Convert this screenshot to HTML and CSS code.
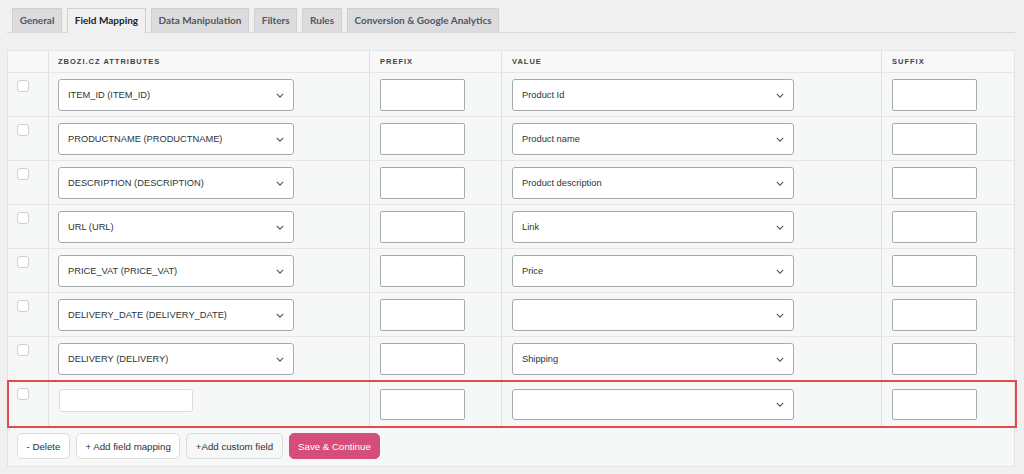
FILE: index.html
```html
<!DOCTYPE html>
<html lang="en">
<head>
  <meta charset="UTF-8" />
  <title>Field Mapping</title>
  <link rel="stylesheet" href="styles.css">
</head>
<body>
  <div class="tabs">
    <a class="tab">General</a>
    <a class="tab active">Field Mapping</a>
    <a class="tab">Data Manipulation</a>
    <a class="tab">Filters</a>
    <a class="tab">Rules</a>
    <a class="tab">Conversion &amp; Google Analytics</a>
  </div>

  <div class="panel">
    <div class="row head">
      <div class="cell"></div>
      <div class="cell">Zbozi.cz attributes</div>
      <div class="cell">Prefix</div>
      <div class="cell">Value</div>
      <div class="cell">Suffix</div>
    </div>

    <div class="row">
      <div class="cell"><span class="check"></span></div>
      <div class="cell"><div class="select attr"><span>ITEM_ID (ITEM_ID)</span><svg viewBox="0 0 10 6"><path d="M1 1l4 4 4-4"/></svg></div></div>
      <div class="cell"><div class="input"></div></div>
      <div class="cell"><div class="select"><span>Product Id</span><svg viewBox="0 0 10 6"><path d="M1 1l4 4 4-4"/></svg></div></div>
      <div class="cell"><div class="input"></div></div>
    </div>
    <div class="row">
      <div class="cell"><span class="check"></span></div>
      <div class="cell"><div class="select attr"><span>PRODUCTNAME (PRODUCTNAME)</span><svg viewBox="0 0 10 6"><path d="M1 1l4 4 4-4"/></svg></div></div>
      <div class="cell"><div class="input"></div></div>
      <div class="cell"><div class="select"><span>Product name</span><svg viewBox="0 0 10 6"><path d="M1 1l4 4 4-4"/></svg></div></div>
      <div class="cell"><div class="input"></div></div>
    </div>
    <div class="row">
      <div class="cell"><span class="check"></span></div>
      <div class="cell"><div class="select attr"><span>DESCRIPTION (DESCRIPTION)</span><svg viewBox="0 0 10 6"><path d="M1 1l4 4 4-4"/></svg></div></div>
      <div class="cell"><div class="input"></div></div>
      <div class="cell"><div class="select"><span>Product description</span><svg viewBox="0 0 10 6"><path d="M1 1l4 4 4-4"/></svg></div></div>
      <div class="cell"><div class="input"></div></div>
    </div>
    <div class="row">
      <div class="cell"><span class="check"></span></div>
      <div class="cell"><div class="select attr"><span>URL (URL)</span><svg viewBox="0 0 10 6"><path d="M1 1l4 4 4-4"/></svg></div></div>
      <div class="cell"><div class="input"></div></div>
      <div class="cell"><div class="select"><span>Link</span><svg viewBox="0 0 10 6"><path d="M1 1l4 4 4-4"/></svg></div></div>
      <div class="cell"><div class="input"></div></div>
    </div>
    <div class="row">
      <div class="cell"><span class="check"></span></div>
      <div class="cell"><div class="select attr"><span>PRICE_VAT (PRICE_VAT)</span><svg viewBox="0 0 10 6"><path d="M1 1l4 4 4-4"/></svg></div></div>
      <div class="cell"><div class="input"></div></div>
      <div class="cell"><div class="select"><span>Price</span><svg viewBox="0 0 10 6"><path d="M1 1l4 4 4-4"/></svg></div></div>
      <div class="cell"><div class="input"></div></div>
    </div>
    <div class="row">
      <div class="cell"><span class="check"></span></div>
      <div class="cell"><div class="select attr"><span>DELIVERY_DATE (DELIVERY_DATE)</span><svg viewBox="0 0 10 6"><path d="M1 1l4 4 4-4"/></svg></div></div>
      <div class="cell"><div class="input"></div></div>
      <div class="cell"><div class="select"><span></span><svg viewBox="0 0 10 6"><path d="M1 1l4 4 4-4"/></svg></div></div>
      <div class="cell"><div class="input"></div></div>
    </div>
    <div class="row">
      <div class="cell"><span class="check"></span></div>
      <div class="cell"><div class="select attr"><span>DELIVERY (DELIVERY)</span><svg viewBox="0 0 10 6"><path d="M1 1l4 4 4-4"/></svg></div></div>
      <div class="cell"><div class="input"></div></div>
      <div class="cell"><div class="select"><span>Shipping</span><svg viewBox="0 0 10 6"><path d="M1 1l4 4 4-4"/></svg></div></div>
      <div class="cell"><div class="input"></div></div>
    </div>
    <div class="row custom">
      <div class="cell"><span class="check"></span></div>
      <div class="cell"><div class="text-field"></div></div>
      <div class="cell"><div class="input"></div></div>
      <div class="cell"><div class="select"><span></span><svg viewBox="0 0 10 6"><path d="M1 1l4 4 4-4"/></svg></div></div>
      <div class="cell"><div class="input"></div></div>
    </div>

    <div class="actions">
      <button class="btn">- Delete</button>
      <button class="btn">+ Add field mapping</button>
      <button class="btn light">+Add custom field</button>
      <button class="btn primary">Save &amp; Continue</button>
    </div>
  </div>
</body>
</html>
```

FILE: styles.css
```css
* {
  margin: 0;
  padding: 0;
  box-sizing: border-box;
}

body {
  background: #f0f0f1;
  font-family: "Liberation Sans", Arial, sans-serif;
  color: #2c3338;
  padding: 8px 9px 0 7px;
}

.tabs {
  display: flex;
  gap: 5px;
  padding-left: 5px;
  border-bottom: 1px solid #d8d8d8;
  height: 25px;
}

.tab {
  font-family: Lato, "Noto Sans", sans-serif;
  font-size: 10px;
  font-weight: bold;
  color: #50575e;
  background: #dcdcde;
  border: 1px solid #d0d0d2;
  border-bottom: none;
  height: 24px;
  line-height: 23px;
  padding: 0 6.7px;
}

.tab.active {
  background: #f0f0f1;
  color: #1d2327;
  height: 25px;
}

.panel {
  margin-top: 17px;
  width: 1008px;
  background: #f6f7f7;
  border: 1px solid #e4e4e4;
}

.row {
  display: grid;
  grid-template-columns: 41px 321px 132px 380px 1fr;
  border-bottom: 1px solid #e6e6e6;
  height: 44px;
}

.cell {
  border-right: 1px solid #e0e0e0;
  padding: 6px 10px 0;
}

.cell:nth-child(2) {
  padding-left: 9px;
}

.cell:first-child {
  padding: 7px 9px 0;
}

.cell:last-child {
  border-right: none;
}

.head {
  height: 22px;
  background: #f8f8f8;
}

.head .cell {
  font-size: 7.5px;
  font-weight: bold;
  letter-spacing: 1px;
  text-transform: uppercase;
  color: #3c434a;
  line-height: 21px;
  padding-top: 0;
}

.check {
  display: block;
  width: 12px;
  height: 12px;
  background: #fff;
  border: 1px solid #cfcfcf;
  border-radius: 3px;
}

.select {
  display: flex;
  align-items: center;
  justify-content: space-between;
  width: 282px;
  height: 32px;
  background: #fff;
  border: 1px solid #a7aaad;
  border-radius: 3px;
  padding: 0 9px 0 9px;
  font-size: 9.3px;
}

.select.attr {
  width: 236px;
}

.select svg {
  width: 8px;
  height: 5px;
  fill: none;
  stroke: #50575e;
  stroke-width: 1.4;
}

.input {
  width: 85px;
  height: 32px;
  background: #fff;
  border: 1px solid #a7aaad;
  border-radius: 2px;
}

.custom {
  height: 46px;
  border-bottom: none;
  outline: 2px solid #e5484d;
  outline-offset: -1px;
  margin-right: -2px;
}

.custom .cell {
  padding-top: 8px;
}

.custom .cell:first-child {
  padding-top: 7px;
}

.custom .input,
.custom .select {
  height: 31px;
}

.text-field {
  width: 134px;
  height: 23px;
  background: #fff;
  border: 1px solid #dcdcde;
  border-radius: 3px;
  margin-left: 1px;
}

.actions {
  display: flex;
  gap: 6px;
  padding: 6px 9px 7px;
}

.btn {
  font-family: "Liberation Sans", Arial, sans-serif;
  font-size: 9.7px;
  color: #2c3338;
  height: 26px;
  padding: 0 8.5px;
  background: #fff;
  border: 1px solid #dcdcde;
  border-radius: 5px;
}

.btn.light {
  background: #f6f7f7;
}

.btn.primary {
  background: #d54e7a;
  border-color: #d54e7a;
  color: #fff;
}
```
